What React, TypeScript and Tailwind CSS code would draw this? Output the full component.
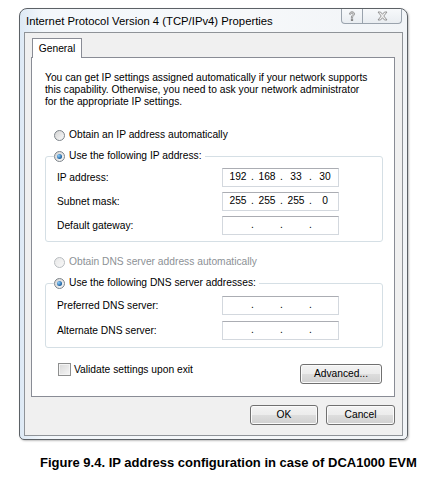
import React from "react";

const SANS = "font-['Liberation_Sans',Arial,sans-serif]";

function Radio({ checked = false, disabled = false }: { checked?: boolean; disabled?: boolean }) {
  return (
    <span
      className={
        "flex h-[11px] w-[11px] shrink-0 items-center justify-center rounded-full border " +
        (disabled
          ? "border-[#b8bcc0] bg-[linear-gradient(135deg,#e8e8e8,#f8f8f8)]"
          : "border-[#7c8389] bg-[linear-gradient(135deg,#d4d4d4,#f9f9f9)]")
      }
    >
      {checked && (
        <span className="h-[5px] w-[5px] rounded-full bg-[radial-gradient(circle_at_35%_35%,#8fd0ff,#1a5d9c_70%)]" />
      )}
    </span>
  );
}

function IpField({ parts }: { parts?: string[] }) {
  const p = parts ?? ["", "", "", ""];
  return (
    <div className="flex h-[19px] w-[117px] items-center border border-[#d3d8de] border-t-[#abadb3] bg-white pl-[3px] text-[10.25px] leading-none text-black">
      <span className="w-[24px] text-center">{p[0]}</span>
      <span className="w-[5px] text-center">.</span>
      <span className="w-[24px] text-center">{p[1]}</span>
      <span className="w-[5px] text-center">.</span>
      <span className="w-[24px] text-center">{p[2]}</span>
      <span className="w-[5px] text-center">.</span>
      <span className="w-[24px] text-center">{p[3]}</span>
    </div>
  );
}

function Row({ label, parts }: { label: string; parts?: string[] }) {
  return (
    <div className="flex h-[19px] items-center">
      <span className="w-[168px] pl-[3px]">{label}</span>
      <IpField parts={parts} />
    </div>
  );
}

function WinButton({ children, w }: { children: React.ReactNode; w: string }) {
  return (
    <button
      className={
        "flex h-[20px] items-center justify-center rounded-[3px] border border-[#707070] bg-[linear-gradient(#f3f3f3_0%,#ececec_48%,#dddddd_52%,#d0d0d0_100%)] text-[10.25px] leading-none text-black shadow-[inset_0_0_0_1px_#fbfbfb] " +
        w
      }
    >
      {children}
    </button>
  );
}

export default function App() {
  return (
    <div className={"flex min-h-[480px] w-[429px] flex-col bg-white " + SANS}>
      {/* Window */}
      <div className="ml-[19px] mt-[8px] flex w-[389px] flex-col rounded-b-[5px] rounded-t-[8px] border border-[#5c6166] bg-[linear-gradient(90deg,#dde9f5_0%,#f3f7fb_6%,#f6f8fa_60%,#f1f4f7_100%)] shadow-[1px_1px_2px_rgba(0,0,0,0.25)]">
        {/* Title bar */}
        <div className="flex h-[23px] items-start justify-between">
          <span className="ml-[6px] mt-[5px] text-[11.3px] leading-[14px] text-black">
            Internet Protocol Version 4 (TCP/IPv4) Properties
          </span>
          <div className="mr-[5px] flex h-[15px] rounded-b-[4px] border-x border-b border-[#9aa3ad] bg-[linear-gradient(#f7f9fb,#e9edf1)]">
            <div className="flex w-[21px] items-center justify-center border-r border-[#9aa3ad]">
              <svg width="8" height="11" viewBox="0 0 8 11">
                <path
                  d="M1.5 3.2 C1.5 1.5 2.6 0.8 4 0.8 C5.5 0.8 6.5 1.6 6.5 3 C6.5 4.4 4.8 4.8 4.6 6.2 L4.6 6.8 L3.4 6.8 L3.4 6 C3.6 4.4 5.2 4 5.2 3 C5.2 2.3 4.7 1.9 4 1.9 C3.2 1.9 2.8 2.4 2.8 3.2 Z"
                  fill="#f4f4f4"
                  stroke="#7d7d7d"
                  strokeWidth="0.8"
                />
                <rect x="3.3" y="8" width="1.4" height="1.6" fill="#f4f4f4" stroke="#7d7d7d" strokeWidth="0.8" />
              </svg>
            </div>
            <div className="flex w-[38px] items-center justify-center">
              <svg width="11" height="10" viewBox="0 0 11 10">
                <path
                  d="M1 1 L3.5 1 L5.5 3.3 L7.5 1 L10 1 L6.8 5 L10 9 L7.5 9 L5.5 6.7 L3.5 9 L1 9 L4.2 5 Z"
                  fill="#f2f2f2"
                  stroke="#808080"
                  strokeWidth="0.8"
                  strokeLinejoin="round"
                />
              </svg>
            </div>
          </div>
        </div>

        {/* Client area */}
        <div className="mx-[4px] mb-[3px] flex flex-col border border-[#8f9398] bg-[#f0f0f0] text-[10.25px] leading-[12px] text-black">
          {/* Tab */}
          <div className="ml-[7px] mt-[5px] flex">
            <div className="relative z-10 -mb-px flex h-[20px] w-[50px] items-center justify-center border-x border-t border-[#898c95] bg-white">
              General
            </div>
          </div>
          {/* Panel */}
          <div className="ml-[6px] mr-[7px] flex flex-col border border-[#898c95] bg-white pb-[12px]">
            <p className="ml-[13px] mt-[14px] whitespace-nowrap">
              You can get IP settings assigned automatically if your network supports
              <br />
              this capability. Otherwise, you need to ask your network administrator
              <br />
              for the appropriate IP settings.
            </p>

            <div className="ml-[22px] mt-[19px] flex h-[16px] items-center gap-[4px]">
              <Radio />
              <span>Obtain an IP address automatically</span>
            </div>

            <fieldset className="ml-[13px] mr-[11px] mt-[5px] rounded-[3px] border border-[#d5dfe5] px-[8px] pb-[6px] pt-[4px]">
              <legend className="pr-[3px]">
                <span className="flex h-[16px] items-center gap-[4px]">
                  <Radio checked />
                  <span>Use the following IP address:</span>
                </span>
              </legend>
              <div className="flex flex-col gap-[5px]">
                <Row label="IP address:" parts={["192", "168", "33", "30"]} />
                <Row label="Subnet mask:" parts={["255", "255", "255", "0"]} />
                <Row label="Default gateway:" />
              </div>
            </fieldset>

            <div className="ml-[22px] mt-[12px] flex h-[16px] items-center gap-[4px] text-[#8d9196]">
              <Radio disabled />
              <span>Obtain DNS server address automatically</span>
            </div>

            <fieldset className="ml-[13px] mr-[11px] mt-[5px] rounded-[3px] border border-[#d5dfe5] px-[8px] pb-[7px] pt-[5px]">
              <legend className="pr-[3px]">
                <span className="flex h-[16px] items-center gap-[4px]">
                  <Radio checked />
                  <span>Use the following DNS server addresses:</span>
                </span>
              </legend>
              <div className="flex flex-col gap-[6px]">
                <Row label="Preferred DNS server:" />
                <Row label="Alternate DNS server:" />
              </div>
            </fieldset>

            <div className="ml-[26px] mr-[12px] mt-[15px] flex items-start justify-between">
              <div className="flex h-[13px] items-center gap-[3px]">
                <span className="h-[13px] w-[13px] border border-[#8e8f8f] bg-[linear-gradient(135deg,#d8d8d8,#f6f6f6)] shadow-[inset_0_0_0_1px_#f4f4f4]" />
                <span>Validate settings upon exit</span>
              </div>
              <WinButton w="w-[82px] mt-[1px]">Advanced...</WinButton>
            </div>
          </div>

          {/* Bottom buttons */}
          <div className="mb-[10px] mr-[7px] mt-[8px] flex justify-end gap-[8px]">
            <WinButton w="w-[68px]">OK</WinButton>
            <WinButton w="w-[69px]">Cancel</WinButton>
          </div>
        </div>
      </div>

      <div className="ml-[40px] mt-[15px] text-[13px] font-bold leading-[16px] text-black">
        Figure 9.4. IP address configuration in case of DCA1000 EVM
      </div>
    </div>
  );
}
